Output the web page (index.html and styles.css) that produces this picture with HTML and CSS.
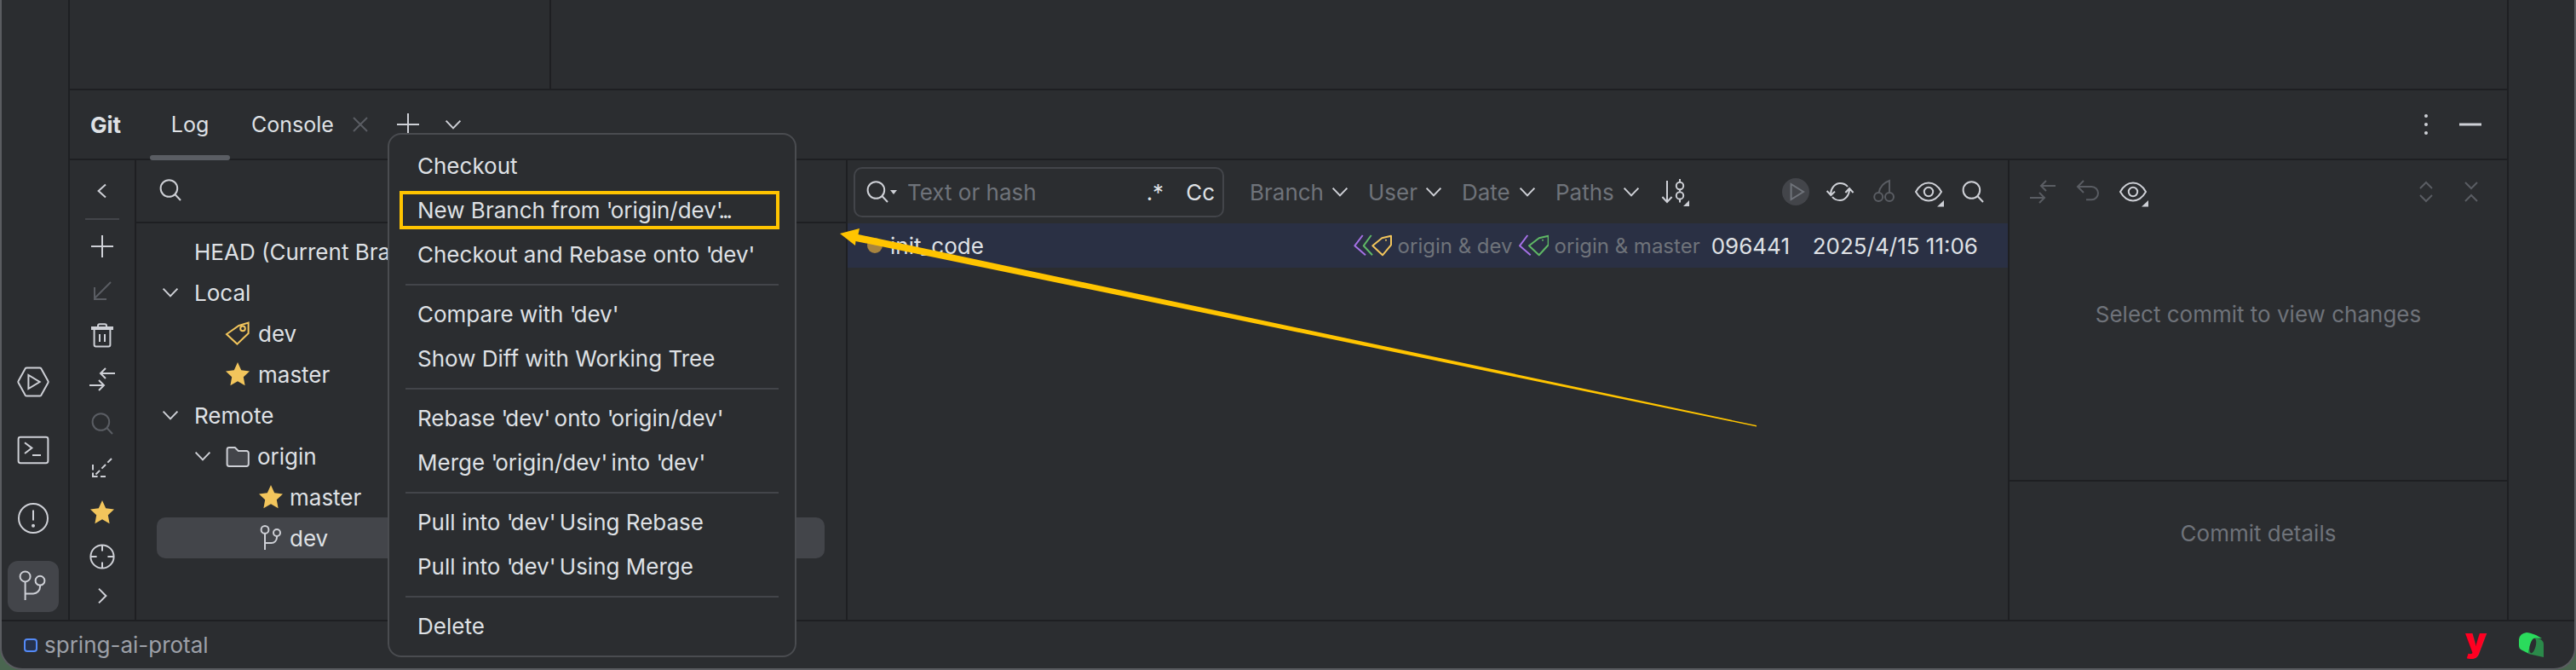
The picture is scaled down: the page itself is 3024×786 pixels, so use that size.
FILE: index.html
```html
<!DOCTYPE html>
<html lang="en">
<head>
<meta charset="utf-8">
<title>Git Log</title>
<link rel="stylesheet" href="styles.css">
</head>
<body>
<svg class="sprite" aria-hidden="true">
  <symbol id="i-run" viewBox="0 0 20 20"><path d="M6.2 1.7h7.6c.4 0 .7.2.9.5l4 7.3c.2.3.2.7 0 1l-4 7.3c-.2.3-.5.5-.9.5H6.2c-.4 0-.7-.2-.9-.5l-4-7.3c-.2-.3-.2-.7 0-1l4-7.3c.2-.3.5-.5.9-.5z"/><path d="M7.2 6v8l6.6-4z"/></symbol>
  <symbol id="i-term" viewBox="0 0 20 20"><rect x="1.3" y="2.4" width="17.4" height="15.2" rx="1.2"/><path d="M5 5.6 9.2 8.8 5 12M9.5 13h5"/></symbol>
  <symbol id="i-problem" viewBox="0 0 20 20"><circle cx="10" cy="10" r="8.5"/><path d="M10 5.3v6"/><circle class="solid" cx="10" cy="14.4" r="1"/></symbol>
  <symbol id="i-git" viewBox="0 0 20 20"><circle cx="5.3" cy="4.2" r="3"/><circle cx="14" cy="6.6" r="2.7"/><path d="M5.3 7.2V18M14 9.3v.9a4 4 0 0 1-4 4H5.3"/></symbol>
  <symbol id="i-branch" viewBox="0 0 16 16"><circle cx="4.5" cy="3.2" r="2.2"/><circle cx="11.5" cy="5" r="2"/><path d="M4.5 5.4V15M11.5 7v.8a3.2 3.2 0 0 1-3.2 3.2H4.5"/></symbol>
  <symbol id="i-left" viewBox="0 0 16 16"><path d="M10 4.2 5.8 8l4.2 3.8"/></symbol>
  <symbol id="i-right" viewBox="0 0 16 16"><path d="M6 3.8 10.2 8 6 12.2"/></symbol>
  <symbol id="i-plus" viewBox="0 0 16 16"><path d="M8 1.5v13M1.5 8h13"/></symbol>
  <symbol id="i-update" viewBox="0 0 16 16"><path d="M13 3 3.5 12.5M3.5 6v7h7"/></symbol>
  <symbol id="i-trash" viewBox="0 0 16 16"><path d="M3.3 5v8.7a1 1 0 0 0 1 1h7.4a1 1 0 0 0 1-1V5M2 4.5h12v-1H2zM5.5 3.4V2.6a1 1 0 0 1 1-1h3a1 1 0 0 1 1 1v.8M6.5 7.5v4.5M9.5 7.5v4.5"/></symbol>
  <symbol id="i-compare" viewBox="0 0 16 16"><path d="M15.5 4.5H7M10 1.5l-3 3 3 3M.5 11.5h8.5M6 8.5l3 3-3 3"/></symbol>
  <symbol id="i-search" viewBox="0 0 16 16"><circle cx="7.2" cy="7" r="4.9"/><path d="M10.7 10.5 14 14"/></symbol>
  <symbol id="i-dashed" viewBox="0 0 16 16"><path d="M13.500 2.500 4 12" stroke-dasharray="3.300 1.600"/><path d="M2.500 6v3.200M2.500 10.800V13h2.800M7 13h3"/></symbol>
  <symbol id="i-star" viewBox="0 0 16 16"><polygon class="gold" points="8,1 10.1,5.6 15,6.2 11.4,9.6 12.3,14.6 8,12.1 3.7,14.6 4.6,9.6 1,6.2 5.9,5.6"/></symbol>
  <symbol id="i-target" viewBox="0 0 16 16"><circle cx="8" cy="8" r="6.8"/><path d="M8 1.2v3.6M8 11.2v3.6M1.2 8h3.6M11.2 8h3.6"/></symbol>
  <symbol id="i-chevron" viewBox="0 0 16 16"><path d="M3.8 5.8 8 10.2l4.2-4.400"/></symbol>
  <symbol id="i-tag" viewBox="0 0 16 16"><path class="gold-line" d="M8.7 3.5 14.3 1.8V8L7.7 14.3 1.5 8.5z"/><circle class="gold-line" cx="11" cy="5.2" r="1.4"/></symbol>
  <symbol id="i-folder" viewBox="0 0 16 16"><path class="filled" d="M1.8 4.2A1.2 1.2 0 0 1 3 3h3.4l2 2h4.8a1.2 1.2 0 0 1 1.2 1.2v6.6a1.2 1.2 0 0 1-1.2 1.2H3A1.2 1.2 0 0 1 1.8 12.800z"/></symbol>
  <symbol id="i-close" viewBox="0 0 16 16"><path d="M4 4l8 8M12 4l-8 8"/></symbol>
  <symbol id="i-sort" viewBox="0 0 16 16"><path d="M3 1.500v12.500M.2 11l2.800 3 2.800-3M10.500 .5v1.700M10.500 6.700v1.200M10.500 12.500v1.700"/><circle cx="10.500" cy="4.500" r="2.100"/><circle cx="10.500" cy="10.200" r="2.100"/><polygon class="solid" points="12.500,16.500 16,16.500 16,13"/></symbol>
  <symbol id="i-play" viewBox="0 0 16 16"><path d="M5.300 3.500v9l7.200-4.500z"/></symbol>
  <symbol id="i-refresh" viewBox="0 0 16 16"><path d="M2.500 9.500C2.500 6 5 3 8 3c2 0 3.500.7 4.500 2M.3 7.500 2.700 10 5 7.800M13.500 6.500C13.500 10 11 13 8 13c-2 0-3.500-.7-4.500-2M11.200 8.500 13.500 6l2.300 2.500"/></symbol>
  <symbol id="i-cherry" viewBox="0 0 16 16"><circle cx="4.600" cy="11" r="2.500"/><circle cx="11" cy="11" r="2.500"/><path d="M4.800 8.500C5.500 5 8 2.500 11 1.500v7"/></symbol>
  <symbol id="i-eye" viewBox="0 0 16 16"><path d="M.5 8C2.500 4.500 5 2.800 8 2.800s5.500 1.700 7.500 5.200c-2 3.500-4.500 5.200-7.500 5.200S2.500 11.500.5 8z"/><circle cx="8" cy="8" r="2.600"/><polygon class="solid" points="13,16.800 17,16.800 17,13"/></symbol>
  <symbol id="i-undo" viewBox="0 0 16 16"><path d="M5.500 1.500 2 5l3.500 3.500M2 5h8.200a3.800 3.800 0 0 1 0 7.600H7"/></symbol>
  <symbol id="i-expand" viewBox="0 0 16 16"><path d="M4.500 6 8 2.500 11.500 6M4.500 10 8 13.500l3.500-3.500"/></symbol>
  <symbol id="i-collapse" viewBox="0 0 16 16"><path d="M4.500 2.500 8 6l3.500-3.500M4.500 13.500 8 10l3.500 3.500"/></symbol>
  <symbol id="i-kebab" viewBox="0 0 16 16"><circle class="solid" cx="8" cy="3" r="1"/><circle class="solid" cx="8" cy="8" r="1"/><circle class="solid" cx="8" cy="13" r="1"/></symbol>
  <symbol id="i-min" viewBox="0 0 16 16"><path class="thick" d="M1.500 8h13"/></symbol>
</svg>

<div class="window">
  <div class="main">
    <nav class="rail">
      <span class="rail-btn"><svg class="ic-lg"><use href="#i-run"/></svg></span>
      <span class="rail-btn"><svg class="ic-lg"><use href="#i-term"/></svg></span>
      <span class="rail-btn"><svg class="ic-lg"><use href="#i-problem"/></svg></span>
      <span class="rail-btn active"><svg class="ic-lg"><use href="#i-git"/></svg></span>
    </nav>

    <div class="center">
      <div class="top-pane"><div class="top-left"></div></div>

      <div class="tabbar">
        <span class="tool-title">Git</span>
        <span class="tab selected">Log</span>
        <span class="tab console">Console</span>
        <svg class="ic dim"><use href="#i-close"/></svg>
        <svg class="ic tab-plus"><use href="#i-plus"/></svg>
        <svg class="ic tab-more"><use href="#i-chevron"/></svg>
        <span class="spacer"></span>
        <svg class="ic"><use href="#i-kebab"/></svg>
        <svg class="ic tab-min"><use href="#i-min"/></svg>
      </div>

      <div class="git-body">
        <aside class="side">
          <svg class="ic"><use href="#i-left"/></svg>
          <span class="side-line"></span>
          <div class="side-stack">
            <svg class="ic"><use href="#i-plus"/></svg>
            <svg class="ic dim"><use href="#i-update"/></svg>
            <svg class="ic"><use href="#i-trash"/></svg>
            <svg class="ic"><use href="#i-compare"/></svg>
            <svg class="ic dim"><use href="#i-search"/></svg>
            <svg class="ic"><use href="#i-dashed"/></svg>
            <svg class="ic"><use href="#i-star"/></svg>
            <svg class="ic"><use href="#i-target"/></svg>
            <svg class="ic side-last"><use href="#i-right"/></svg>
          </div>
        </aside>

        <section class="tree">
          <div class="tree-head"><svg class="ic"><use href="#i-search"/></svg></div>
          <ul class="tree-list">
            <li class="row lv0"><span class="no-chev"></span><span>HEAD (Current Branch)</span></li>
            <li class="row lv0"><svg class="ic"><use href="#i-chevron"/></svg><span class="lv0-label">Local</span></li>
            <li class="row lv1"><svg class="ic"><use href="#i-tag"/></svg><span>dev</span></li>
            <li class="row lv1"><svg class="ic"><use href="#i-star"/></svg><span>master</span></li>
            <li class="row lv0"><svg class="ic"><use href="#i-chevron"/></svg><span class="lv0-label">Remote</span></li>
            <li class="row lv1-open"><svg class="ic"><use href="#i-chevron"/></svg><svg class="ic"><use href="#i-folder"/></svg><span>origin</span></li>
            <li class="row lv2"><svg class="ic"><use href="#i-star"/></svg><span>master</span></li>
            <li class="row lv2 current"><svg class="ic"><use href="#i-branch"/></svg><span>dev</span></li>
          </ul>
        </section>

        <section class="log">
          <div class="log-bar">
            <div class="find">
              <svg class="ic"><use href="#i-search"/></svg>
              <i class="find-drop"></i>
              <span class="find-hint">Text or hash</span>
              <span class="find-regex">.*</span>
              <span class="find-case">Cc</span>
            </div>
            <div class="filters">
              <span class="filter f-branch">Branch<svg class="ic"><use href="#i-chevron"/></svg></span>
              <span class="filter f-user">User<svg class="ic"><use href="#i-chevron"/></svg></span>
              <span class="filter f-date">Date<svg class="ic"><use href="#i-chevron"/></svg></span>
              <span class="filter f-paths">Paths<svg class="ic"><use href="#i-chevron"/></svg></span>
              <svg class="ic"><use href="#i-sort"/></svg>
            </div>
            <div class="log-tools">
              <span class="run-pill"><svg class="ic dim-mid"><use href="#i-play"/></svg></span>
              <svg class="ic"><use href="#i-refresh"/></svg>
              <svg class="ic dim"><use href="#i-cherry"/></svg>
              <svg class="ic"><use href="#i-eye"/></svg>
              <svg class="ic"><use href="#i-search"/></svg>
            </div>
          </div>
          <div class="commit">
            <i class="commit-dot"></i>
            <span class="commit-msg">init_code</span>
            <span class="refs refs-first">
              <svg class="ref-ic w45" viewBox="0 0 45 26"><path class="purple" d="M10.700 1 1.300 13.300 14 24.300"/><path class="green" d="M20.700 1 11.700 13.300 22 24.300"/><path class="yellow" d="M33.300 4.300 44 1.700V12.300L34 24.300 22.300 13.300z"/><circle class="yellow" cx="38" cy="6.700" r="1"/></svg>
              <span>origin &amp; dev</span>
            </span>
            <span class="refs">
              <svg class="ref-ic w35" viewBox="0 0 35 26"><path class="purple" d="M10.300 1 1 13.300 13.700 24.300"/><path class="green" d="M23.700 4.300 34.700 1.700V12.300L23.700 24.300 12 13.300z"/><circle class="green" cx="28" cy="6.700" r="1"/></svg>
              <span>origin &amp; master</span>
            </span>
            <span class="commit-hash">096441</span>
            <span class="commit-date">2025/4/15 11:06</span>
          </div>
        </section>

        <section class="changes">
          <div class="changes-bar">
            <svg class="ic dim"><use href="#i-compare"/></svg>
            <svg class="ic dim"><use href="#i-undo"/></svg>
            <svg class="ic"><use href="#i-eye"/></svg>
            <span class="spacer"></span>
            <svg class="ic dim"><use href="#i-expand"/></svg>
            <svg class="ic dim"><use href="#i-collapse"/></svg>
          </div>
          <div class="changes-empty">Select commit to view changes</div>
          <div class="changes-details">Commit details</div>
        </section>
      </div>
    </div>

    <div class="right-strip"></div>
  </div>

  <footer class="status">
    <i class="project-dot"></i>
    <span class="project">spring-ai-protal</span>
    <span class="spacer"></span>
    <span class="plugin-y">y</span>
    <svg class="plugin-g" viewBox="0 0 29 29"><path class="g-dark" d="M13 5 24 7.500Q29 9 29 14V29L20 27 11 25z"/><path class="g-bright" d="M0 8Q1 1 9 0 12 0 20 3L27 7 19 6.500Q13 8 11 24.500L3 20.500Q0 19 0 15z"/><ellipse class="g-hole" cx="16.300" cy="15.500" rx="3.400" ry="9" transform="rotate(14 16.300 15.500)"/></svg>
  </footer>

  <div class="menu">
    <div class="item">Checkout</div>
    <div class="item">New Branch from <span class="q">'</span>origin/dev<span class="q">'</span><span class="dots">...</span></div>
    <div class="item">Checkout and Rebase onto <span class="q">'</span>dev<span class="q">'</span></div>
    <div class="sep"></div>
    <div class="item">Compare with <span class="q">'</span>dev<span class="q">'</span></div>
    <div class="item">Show Diff with Working Tree</div>
    <div class="sep"></div>
    <div class="item">Rebase <span class="q">'</span>dev<span class="q">'</span> onto <span class="q">'</span>origin/dev<span class="q">'</span></div>
    <div class="item">Merge <span class="q">'</span>origin/dev<span class="q">'</span> into <span class="q">'</span>dev<span class="q">'</span></div>
    <div class="sep"></div>
    <div class="item">Pull into <span class="q">'</span>dev<span class="q">'</span> Using Rebase</div>
    <div class="item">Pull into <span class="q">'</span>dev<span class="q">'</span> Using Merge</div>
    <div class="sep"></div>
    <div class="item">Delete</div>
  </div>

  <div class="mark-box"></div>
  <svg class="mark-arrow" viewBox="0 0 3024 786"><polygon points="986,274 1009,268 1007.500,275 2062,499 2062,500.500 1004.500,283 1004,288"/></svg>
</div>
</body>
</html>
```

FILE: styles.css
```css
* { box-sizing: border-box; }
html, body { margin: 0; padding: 0; }
body {
  width: 3024px;
  height: 786px;
  overflow: hidden;
  background: #4a6650;
  font-family: Inter, "Noto Sans", sans-serif;
  font-size: 26px;
  color: #dfe1e5;
}
.sprite { width: 0; height: 0; position: absolute; }
symbol { overflow: visible; }

.ic, .ic-lg {
  flex: none;
  overflow: visible;
  fill: none;
  stroke: #ced0d6;
  stroke-width: 1;
}
.ic { width: 32px; height: 32px; }
.ic-lg { width: 40px; height: 40px; }
.dim { stroke: #5a5d63; }
.dim-mid { stroke: #6f737a; }
.solid { fill: #ced0d6; stroke: none; }
.gold { fill: #f2c55c; stroke: none; }
.gold-line { stroke: #f2c55c; }
.filled { fill: #43454a; }
.thick { stroke-width: 1.5; }
.spacer { flex: 1; }

.window {
  position: relative;
  width: 3024px;
  height: 786px;
  display: flex;
  flex-direction: column;
  background: #2b2d30;
  border: 2px solid #5a5c60;
  border-top: 0;
  border-radius: 0 0 26px 26px;
  overflow: hidden;
}

.main { flex: none; height: 727px; display: flex; }

.rail {
  flex: none;
  width: 80px;
  padding: 0 4px 9px 0;
  border-right: 2px solid #1e1f22;
  display: flex;
  flex-direction: column;
  justify-content: flex-end;
  align-items: center;
  gap: 20px;
}
.rail-btn {
  width: 60px;
  height: 60px;
  border-radius: 12px;
  display: flex;
  align-items: center;
  justify-content: center;
}
.rail-btn.active { background: #43454a; }

.center { flex: none; width: 2863px; display: flex; flex-direction: column; border-right: 2px solid #1e1f22; }
.right-strip { flex: 1; }

.top-pane { flex: none; height: 106px; border-bottom: 2px solid #1e1f22; }
.top-left { width: 565px; height: 100%; border-right: 2px solid #1e1f22; }

.tabbar {
  flex: none;
  height: 82px;
  display: flex;
  align-items: center;
  border-bottom: 2px solid #1e1f22;
  padding: 0 27px 0 24px;
}
.tool-title { font-weight: 700; width: 70px; }
.tab { position: relative; height: 80px; display: flex; align-items: center; flex: none; font-size: 25px; }
.tab.selected { width: 94px; justify-content: center; }
.tab.selected::after {
  content: "";
  position: absolute;
  left: 0;
  right: 0;
  bottom: -2px;
  height: 6px;
  border-radius: 3px;
  background: #5a5d63;
}
.tab.console { margin-left: 25px; width: 112px; }
.tab-plus { margin-left: 24px; }
.tab-more { margin-left: 21px; }
.tab-min { margin-left: 20px; }

.git-body { flex: 1; min-height: 0; display: flex; }

.side {
  flex: none;
  width: 78px;
  padding-top: 20px;
  border-right: 2px solid #1e1f22;
  display: flex;
  flex-direction: column;
  align-items: center;
}
.side-line { width: 40px; height: 2px; background: #43454a; margin: 16px 0 15px; }
.side-stack { display: flex; flex-direction: column; align-items: center; gap: 20px; }
.side-last { margin-top: -6px; }

.tree { flex: none; width: 835px; border-right: 2px solid #1e1f22; }
.tree-head {
  height: 74px;
  padding: 0 0 2px 24px;
  display: flex;
  align-items: center;
  border-bottom: 2px solid #1e1f22;
}
.tree-list { list-style: none; margin: 9px 0 0; padding: 0; }
.row {
  height: 48px;
  margin: 0 25px 0 24px;
  display: flex;
  align-items: center;
  white-space: nowrap;
  border-radius: 10px;
}
.row.current { background: #43454a; }
.no-chev { width: 44px; flex: none; }
.lv0-label { margin-left: 12px; }
.lv1 { padding-left: 79px; gap: 8px; }
.lv1-open { padding-left: 38px; }
.lv1-open .ic + .ic { margin: 0 7px 0 9px; }
.lv2 { padding-left: 118px; gap: 6px; }

.log { flex: none; width: 1364px; border-right: 2px solid #1e1f22; }
.log-bar { height: 74px; display: flex; align-items: center; padding-left: 7px; }
.find {
  flex: none;
  width: 435px;
  height: 59px;
  border: 2px solid #43454a;
  border-radius: 10px;
  display: flex;
  align-items: center;
  padding-left: 10px;
}
.find-drop {
  flex: none;
  width: 0;
  height: 0;
  border: 4px solid transparent;
  border-top: 5px solid #ced0d6;
  border-bottom: 0;
  margin-left: -1px;
}
.find-hint { color: #6f737a; margin-left: 12px; }
.find-regex { margin-left: auto; }
.find-case { margin: 0 9px 0 26px; }
.filters { flex: none; display: flex; align-items: center; margin-left: 30px; color: #6f737a; }
.filter { display: flex; align-items: center; justify-content: space-between; padding-right: 17px; }
.f-branch { width: 139px; }
.f-user { width: 110px; }
.f-date { width: 110px; }
.f-paths { width: 125px; padding-right: 20px; }
.log-tools { margin-left: auto; margin-right: 25px; display: flex; align-items: center; gap: 20px; }
.run-pill { width: 32px; height: 32px; border-radius: 50%; background: #43454a; display: flex; }

.commit {
  height: 52px;
  background: #2a3044;
  display: flex;
  align-items: center;
  white-space: nowrap;
  padding: 0 35px 0 23px;
}
.commit-dot { flex: none; width: 18px; height: 18px; border-radius: 50%; background: #a8843f; margin-right: 9px; }
.refs { display: flex; align-items: center; gap: 7px; color: #6f737a; margin-right: 7px; font-size: 24px; }
.refs-first { margin-left: auto; }
.ref-ic { flex: none; height: 26px; fill: none; stroke-width: 2; stroke-linejoin: round; }
.w45 { width: 45px; }
.w35 { width: 35px; }
.purple { stroke: #a571e6; }
.green { stroke: #5fb865; }
.yellow { stroke: #f2c55c; }
circle.yellow { fill: #f2c55c; stroke: none; }
circle.green { fill: #5fb865; stroke: none; }
.commit-hash { margin-left: 6px; width: 119px; }
.commit-date { flex: none; }

.changes { flex: 1; display: flex; flex-direction: column; }
.changes-bar { flex: none; height: 74px; display: flex; align-items: center; gap: 21px; padding: 0 26px 0 23px; }
.changes-empty {
  flex: none;
  height: 303px;
  padding-top: 91px;
  text-align: center;
  color: #6f737a;
  border-bottom: 2px solid #1e1f22;
}
.changes-details { flex: 1; padding-top: 45px; text-align: center; color: #6f737a; }

.status {
  flex: 1;
  display: flex;
  align-items: center;
  padding: 0 36px 0 26px;
  border-top: 2px solid #1e1f22;
  color: #9da0a8;
}
.project-dot {
  flex: none;
  width: 16px;
  height: 16px;
  border: 2px solid #548af7;
  border-radius: 4px;
  background: #25324d;
  margin-right: 8px;
}
.plugin-y {
  font-family: Inter, sans-serif;
  font-size: 40px;
  font-weight: 900;
  color: #ff0022;
  line-height: 1;
  margin: -12px 38px 0 0;
}
.plugin-g { flex: none; width: 29px; height: 29px; }
.g-dark { fill: #2b8a4a; }
.g-bright { fill: #2adb5c; }
.g-hole { fill: #2b2d30; }

.menu {
  position: absolute;
  left: 453px;
  top: 156px;
  width: 480px;
  height: 615px;
  padding-top: 11px;
  background: #2b2d30;
  border: 2px solid #4a4c50;
  border-radius: 16px;
}
.item { height: 52px; line-height: 52px; padding-left: 33px; white-space: nowrap; }
.q { letter-spacing: -3px; }
.dots { letter-spacing: -3px; }
.sep { height: 2px; margin: 8px 19px; background: #43454a; }

.mark-box {
  position: absolute;
  left: 467px;
  top: 224px;
  width: 446px;
  height: 45px;
  border: 4px solid #ffc400;
}
.mark-arrow {
  position: absolute;
  left: -2px;
  top: 0;
  width: 3024px;
  height: 786px;
  fill: #ffc400;
  pointer-events: none;
}
```
